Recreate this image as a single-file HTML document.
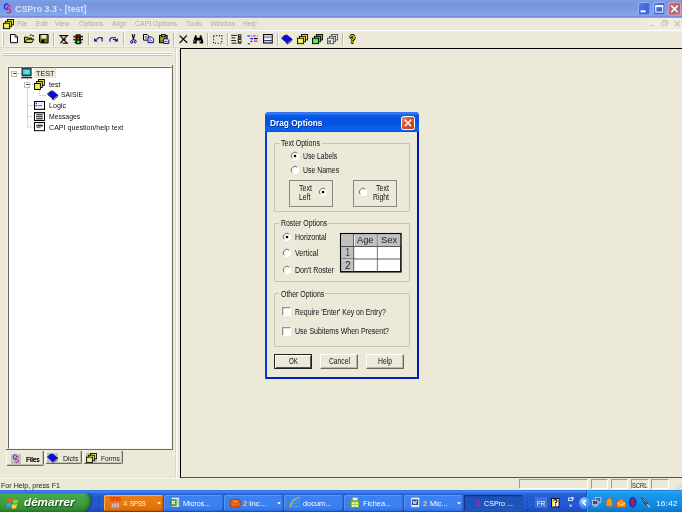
<!DOCTYPE html>
<html><head><meta charset="utf-8"><title>CSPro</title>
<style>
*{box-sizing:border-box;margin:0;padding:0}
html,body{width:682px;height:512px;overflow:hidden}
#root{position:absolute;left:0;top:0;width:682px;height:512px;overflow:hidden;will-change:transform}
body{position:relative;background:#ece9d8;font-family:"Liberation Sans",sans-serif;font-size:8px;color:#222}
.a{position:absolute}
.t{position:absolute;white-space:nowrap;line-height:1.16;transform-origin:0 0}
svg{position:absolute;overflow:visible}
#title{background:linear-gradient(#7ca3e7 0,#7a98e0 1.3px,#7996df 5px,#7a98e0 9px,#7fa4e8 13px,#80a9eb 15.3px,#7490e0 16.3px,#6f88dc 17px,#8aa0e0 17.5px)}
.sep{position:absolute;top:32.5px;width:1px;height:13px;background:#bcb9a8;box-shadow:1px 0 0 rgba(255,255,255,.8)}
#mdi{border-left:1.4px solid #000;border-top:1.3px solid #000;border-bottom:1px solid #55534a;border-right:none;background:#ece9d8}
#tree{background:#fff;border:1.2px solid #6c695c;border-right:1.6px solid #f6f5ee;border-bottom:1.6px solid #f6f5ee;box-shadow:-1px -1px 0 #f2f0e6}
#dlg{background:#ece9d8;border:2px solid #0a3be0;border-top:none;border-right-color:#0019b4;border-bottom-color:#0020c0;border-radius:4px 4px 0 0}
#dt{border-radius:4px 4px 0 0;background:linear-gradient(#2a70ee 0,#3a80f4 1.2px,#0c5ce8 3.5px,#0655e2 6px,#0452de 11px,#0a5eec 15.5px,#0c66f6 18px,#0a4ad8 19.8px)}
.gb{position:absolute;border:1px solid #c9c5b2;border-radius:1px}
.rad{position:absolute;width:8.2px;height:8.2px;border-radius:50%;background:#fff;border:1px solid;border-color:#807d70 #fdfcf8 #fdfcf8 #807d70;box-shadow:inset .7px .7px 0 #6a6860;transform:rotate(0deg)}
.rad.on:after{content:"";position:absolute;left:1.9px;top:1.9px;width:2.4px;height:2.4px;border-radius:50%;background:#000}
.chk{position:absolute;width:9px;height:9px;background:#fff;border:1px solid #fff;border-top-color:#96948a;border-left-color:#96948a;box-shadow:inset .6px .6px 0 #c8c6bc}
.sbox{position:absolute;border:1px solid #8a887a}
.btn{position:absolute;height:15px;border:1px solid #fff;border-right-color:#6a685c;border-bottom-color:#6a685c;box-shadow:inset -1px -1px 0 #bab7a6}
.sp{position:absolute;top:479.4px;height:10px;border:1px solid #9d9a8a;border-right-color:#fff;border-bottom-color:#fff}
#task{background:linear-gradient(#2a62d8 0,#3c88f0 1px,#3a84ee 2.2px,#2a64da 3.6px,#2459d2 7px,#2358d2 16px,#1f4fc4 20px,#1c48b8 22.2px)}
.tb{position:absolute;top:495.2px;height:16.2px;border-radius:2px;background:linear-gradient(#4a8cf2 0,#3c81f2 1.5px,#3b7ff0 12px,#3474e6 15px,#2a62d4 16.2px);box-shadow:inset 1px 1px 0 rgba(110,165,250,.5),inset -.6px 0 0 rgba(20,60,160,.5)}

</style></head><body><div id="root">
<div class="a" id="title" style="left:0px;top:0px;width:682px;height:17.5px;"></div>
<span class="t" style="left:15.00px;top:3px;line-height:11px;font-size:9.6px;color:#d6e0f7;font-weight:bold;transform:scaleX(0.9244);">CSPro 3.3 - [test]</span>
<span class="t" style="left:17.00px;top:19px;line-height:9px;font-size:7.8px;color:#b0ac9c;transform:scaleX(0.8354);">File</span>
<span class="t" style="left:35.70px;top:19px;line-height:9px;font-size:7.8px;color:#b0ac9c;transform:scaleX(0.8705);">Edit</span>
<span class="t" style="left:55.40px;top:19px;line-height:9px;font-size:7.8px;color:#b0ac9c;transform:scaleX(0.8589);">View</span>
<span class="t" style="left:79.00px;top:19px;line-height:9px;font-size:7.8px;color:#b0ac9c;transform:scaleX(0.9003);">Options</span>
<span class="t" style="left:111.50px;top:19px;line-height:9px;font-size:7.8px;color:#b0ac9c;transform:scaleX(0.8360);">Align</span>
<span class="t" style="left:135.00px;top:19px;line-height:9px;font-size:7.8px;color:#b0ac9c;transform:scaleX(0.8888);">CAPI Options</span>
<span class="t" style="left:185.70px;top:19px;line-height:9px;font-size:7.8px;color:#b0ac9c;transform:scaleX(0.8787);">Tools</span>
<span class="t" style="left:210.00px;top:19px;line-height:9px;font-size:7.8px;color:#b0ac9c;transform:scaleX(0.9120);">Window</span>
<span class="t" style="left:243.00px;top:19px;line-height:9px;font-size:7.8px;color:#b0ac9c;transform:scaleX(0.8602);">Help</span>
<div class="a" style="left:0px;top:30px;width:682px;height:1px;background:#fff"></div>
<div class="sep" style="left:53.0px"></div>
<div class="sep" style="left:88.0px"></div>
<div class="sep" style="left:123.0px"></div>
<div class="sep" style="left:172.5px"></div>
<div class="sep" style="left:207.0px"></div>
<div class="sep" style="left:226.5px"></div>
<div class="sep" style="left:277.0px"></div>
<div class="sep" style="left:341.5px"></div>
<div class="a" style="left:1.5px;top:32.5px;width:2.2px;height:13px;border-left:1px solid #fff;border-right:1px solid #c4c1b1"></div>
<div class="a" id="mdi" style="left:179.7px;top:47.6px;width:502.3px;height:430px;"></div>
<div class="a" style="left:175.2px;top:48px;width:0.8px;height:429.5px;background:#dcd9cc"></div>
<div class="a" style="left:176px;top:48px;width:1.3px;height:429.5px;background:#fff"></div>
<div class="a" style="left:3.2px;top:51.6px;width:168.4px;height:2px;border-top:1px solid #fff;border-bottom:1px solid #c6c2b2"></div>
<div class="a" style="left:3.2px;top:54.3px;width:168.4px;height:2px;border-top:1px solid #fff;border-bottom:1px solid #c6c2b2"></div>
<div class="a" id="tree" style="left:7.6px;top:66.6px;width:164.2px;height:382.8px;"></div>
<div class="a" style="left:171.8px;top:65px;width:1px;height:385.4px;background:#6e6b5e"></div>
<div class="a" style="left:34px;top:68px;width:22px;height:10px;background:#ece9d8"></div>
<span class="t" style="left:36.00px;top:69px;line-height:9px;font-size:7.8px;color:#111;transform:scaleX(0.9280);">TEST</span>
<span class="t" style="left:49.00px;top:80px;line-height:9px;font-size:7.8px;color:#111;transform:scaleX(0.9147);">test</span>
<span class="t" style="left:61.00px;top:90px;line-height:9px;font-size:7.8px;color:#111;transform:scaleX(0.8749);">SAISIE</span>
<span class="t" style="left:48.80px;top:101px;line-height:9px;font-size:7.8px;color:#111;transform:scaleX(0.9117);">Logic</span>
<span class="t" style="left:48.80px;top:112px;line-height:9px;font-size:7.8px;color:#111;transform:scaleX(0.8776);">Messages</span>
<span class="t" style="left:48.80px;top:123px;line-height:9px;font-size:7.8px;color:#111;transform:scaleX(0.9103);">CAPI question/help text</span>
<div id="dlg" class="a" style="left:265px;top:112px;width:154px;height:267px"><div id="dt" class="a" style="left:-2px;top:0;width:154px;height:19.8px"></div></div>
<span class="t" style="left:269.60px;top:117px;line-height:11px;font-size:9.4px;color:#fff;font-weight:bold;transform:scaleX(0.8835);text-shadow:.5px .5px 0 #0a2a8c;">Drag Options</span>
<div class="gb" style="left:274px;top:143.2px;width:136px;height:68.8px"></div>
<div class="a" style="left:279.5px;top:142.2px;width:42px;height:3px;background:#ece9d8"></div>
<span class="t" style="left:281.00px;top:138px;line-height:10px;font-size:8.4px;color:#111;transform:scaleX(0.8353);">Text Options</span>
<div class="gb" style="left:274px;top:222.5px;width:136px;height:59px"></div>
<div class="a" style="left:279.1px;top:221.5px;width:49.4px;height:3px;background:#ece9d8"></div>
<span class="t" style="left:280.60px;top:218px;line-height:10px;font-size:8.4px;color:#111;transform:scaleX(0.8282);">Roster Options</span>
<div class="gb" style="left:274px;top:293.2px;width:136px;height:53.8px"></div>
<div class="a" style="left:279.1px;top:292.2px;width:46.4px;height:3px;background:#ece9d8"></div>
<span class="t" style="left:280.60px;top:289px;line-height:10px;font-size:8.4px;color:#111;transform:scaleX(0.8300);">Other Options</span>
<svg style="left:289.8px;top:150.7px" width="10" height="10" viewBox="0 0 10 10"><circle cx="5" cy="5" r="4.0" fill="#fff"/><path d="M2.38 7.62A3.7 3.7 0 0 1 7.62 2.38" fill="none" stroke="#6e6c60" stroke-width="1"/><path d="M7.62 2.38A3.7 3.7 0 0 1 2.38 7.62" fill="none" stroke="#fff" stroke-width="1"/><circle cx="5" cy="5" r="1.35" fill="#000"/></svg>
<span class="t" style="left:302.70px;top:151px;line-height:10px;font-size:8.4px;color:#111;transform:scaleX(0.8162);">Use Labels</span>
<svg style="left:289.8px;top:164.5px" width="10" height="10" viewBox="0 0 10 10"><circle cx="5" cy="5" r="4.0" fill="#fff"/><path d="M2.38 7.62A3.7 3.7 0 0 1 7.62 2.38" fill="none" stroke="#6e6c60" stroke-width="1"/><path d="M7.62 2.38A3.7 3.7 0 0 1 2.38 7.62" fill="none" stroke="#fff" stroke-width="1"/></svg>
<span class="t" style="left:302.70px;top:165px;line-height:10px;font-size:8.4px;color:#111;transform:scaleX(0.8273);">Use Names</span>
<div class="sbox" style="left:289px;top:180px;width:44px;height:27px"></div>
<div class="sbox" style="left:353px;top:180px;width:44px;height:27px"></div>
<span class="t" style="left:299.00px;top:183px;line-height:10px;font-size:8.4px;color:#111;transform:scaleX(0.8439);">Text</span>
<span class="t" style="left:299.00px;top:192px;line-height:10px;font-size:8.4px;color:#111;transform:scaleX(0.8208);">Left</span>
<svg style="left:317.6px;top:187.2px" width="10" height="10" viewBox="0 0 10 10"><circle cx="5" cy="5" r="4.0" fill="#fff"/><path d="M2.38 7.62A3.7 3.7 0 0 1 7.62 2.38" fill="none" stroke="#6e6c60" stroke-width="1"/><path d="M7.62 2.38A3.7 3.7 0 0 1 2.38 7.62" fill="none" stroke="#fff" stroke-width="1"/><circle cx="5" cy="5" r="1.35" fill="#000"/></svg>
<svg style="left:358.2px;top:187.2px" width="10" height="10" viewBox="0 0 10 10"><circle cx="5" cy="5" r="4.0" fill="#fff"/><path d="M2.38 7.62A3.7 3.7 0 0 1 7.62 2.38" fill="none" stroke="#6e6c60" stroke-width="1"/><path d="M7.62 2.38A3.7 3.7 0 0 1 2.38 7.62" fill="none" stroke="#fff" stroke-width="1"/></svg>
<span class="t" style="left:376.00px;top:183px;line-height:10px;font-size:8.4px;color:#111;transform:scaleX(0.8439);">Text</span>
<span class="t" style="left:373.00px;top:192px;line-height:10px;font-size:8.4px;color:#111;transform:scaleX(0.8159);">Right</span>
<svg style="left:281.6px;top:231.7px" width="10" height="10" viewBox="0 0 10 10"><circle cx="5" cy="5" r="4.0" fill="#fff"/><path d="M2.38 7.62A3.7 3.7 0 0 1 7.62 2.38" fill="none" stroke="#6e6c60" stroke-width="1"/><path d="M7.62 2.38A3.7 3.7 0 0 1 2.38 7.62" fill="none" stroke="#fff" stroke-width="1"/><circle cx="5" cy="5" r="1.35" fill="#000"/></svg>
<span class="t" style="left:294.50px;top:232px;line-height:10px;font-size:8.4px;color:#111;transform:scaleX(0.8330);">Horizontal</span>
<svg style="left:281.6px;top:247.6px" width="10" height="10" viewBox="0 0 10 10"><circle cx="5" cy="5" r="4.0" fill="#fff"/><path d="M2.38 7.62A3.7 3.7 0 0 1 7.62 2.38" fill="none" stroke="#6e6c60" stroke-width="1"/><path d="M7.62 2.38A3.7 3.7 0 0 1 2.38 7.62" fill="none" stroke="#fff" stroke-width="1"/></svg>
<span class="t" style="left:294.50px;top:248px;line-height:10px;font-size:8.4px;color:#111;transform:scaleX(0.8458);">Vertical</span>
<svg style="left:281.6px;top:264.6px" width="10" height="10" viewBox="0 0 10 10"><circle cx="5" cy="5" r="4.0" fill="#fff"/><path d="M2.38 7.62A3.7 3.7 0 0 1 7.62 2.38" fill="none" stroke="#6e6c60" stroke-width="1"/><path d="M7.62 2.38A3.7 3.7 0 0 1 2.38 7.62" fill="none" stroke="#fff" stroke-width="1"/></svg>
<span class="t" style="left:294.50px;top:265px;line-height:10px;font-size:8.4px;color:#111;transform:scaleX(0.8401);">Don't Roster</span>
<svg style="left:339px;top:231.6px" width="64" height="41" viewBox="0 0 64 41"><rect x="1.7" y="1.7" width="60.2" height="38.1" fill="#fff" stroke="#000" stroke-width="1.5"/><rect x="2.3" y="2.3" width="58.9" height="12" fill="#c0c0c0"/><rect x="2.3" y="2.3" width="12.2" height="36.4" fill="#c0c0c0"/><g stroke="#333" stroke-width=".8"><path d="M14.7 2v37M2 14.5h59.5M2 27h59.5"/><path d="M38.4 2v37" stroke="#555"/></g><path d="M15.5 2.6v11.4" stroke="#fff" stroke-width=".8"/><path d="M2.4 27.8h11.8" stroke="#fff" stroke-width=".7"/><path d="M38.9 2.6v11.4" stroke="#d8d8d8" stroke-width=".6"/></svg>
<span class="t" style="left:357.00px;top:234px;line-height:11px;font-size:9.6px;color:#222;transform:scaleX(0.9601);">Age</span>
<span class="t" style="left:380.70px;top:234px;line-height:11px;font-size:9.6px;color:#222;transform:scaleX(0.9854);">Sex</span>
<span class="t" style="left:345.60px;top:246px;line-height:12px;font-size:10.5px;color:#222;transform:scaleX(0.6165);">1</span>
<span class="t" style="left:344.70px;top:259px;line-height:12px;font-size:10.5px;color:#222;transform:scaleX(0.9590);">2</span>
<div class="chk" style="left:282px;top:307px"></div>
<span class="t" style="left:295.00px;top:307px;line-height:10px;font-size:8.4px;color:#111;transform:scaleX(0.8263);">Require 'Enter' Key on Entry?</span>
<div class="chk" style="left:282px;top:326.6px"></div>
<span class="t" style="left:295.00px;top:326px;line-height:10px;font-size:8.4px;color:#111;transform:scaleX(0.8381);">Use Subitems When Present?</span>
<div class="btn" style="left:274.3px;top:354.2px;width:37.6px;border-color:#222;box-shadow:inset 1px 1px 0 #fff,inset -1px -1px 0 #55534a"></div>
<div class="btn" style="left:320px;top:354.2px;width:37.8px"></div>
<div class="btn" style="left:366px;top:354.2px;width:37.8px"></div>
<span class="t" style="left:288.50px;top:356px;line-height:10px;font-size:8.4px;color:#111;transform:scaleX(0.7416);">OK</span>
<span class="t" style="left:328.50px;top:356px;line-height:10px;font-size:8.4px;color:#111;transform:scaleX(0.8031);">Cancel</span>
<span class="t" style="left:378.00px;top:356px;line-height:10px;font-size:8.4px;color:#111;transform:scaleX(0.8104);">Help</span>
<div class="a" style="left:5.8px;top:449.4px;width:167px;height:1px;background:#6e6b5e"></div>
<div class="a" style="left:6px;top:450.8px;width:38.2px;height:14.8px;border:1px solid #fbfaf4;border-top:none;border-right-color:#6e6b5e;border-bottom-color:#6e6b5e;border-radius:0 0 2px 2px;box-shadow:inset -1px -1px 0 #c2bfae;background:#ece9d8"></div>
<div class="a" style="left:44.6px;top:450.8px;width:37px;height:13.6px;border:1px solid #fbfaf4;border-top:none;border-right-color:#6e6b5e;border-bottom-color:#6e6b5e;border-radius:0 0 2px 2px;box-shadow:inset -1px -1px 0 #c2bfae;"></div>
<div class="a" style="left:82.8px;top:450.8px;width:40.6px;height:13.6px;border:1px solid #fbfaf4;border-top:none;border-right-color:#6e6b5e;border-bottom-color:#6e6b5e;border-radius:0 0 2px 2px;box-shadow:inset -1px -1px 0 #c2bfae;"></div>
<div class="a" style="left:11px;top:453.8px;width:10px;height:10.6px;background:#c0c0c0"></div>
<div class="a" style="left:47px;top:453px;width:10.8px;height:10.2px;background:#c0c0c0"></div>
<div class="a" style="left:86px;top:453px;width:10.8px;height:10.2px;background:#c0c0c0"></div>
<span class="t" style="left:25.80px;top:455px;line-height:9px;font-size:7.8px;color:#000;transform:scaleX(0.8258);text-shadow:.3px 0 0 #000;">Files</span>
<span class="t" style="left:62.50px;top:454px;line-height:9px;font-size:7.8px;color:#111;transform:scaleX(0.8943);">Dicts</span>
<span class="t" style="left:101.00px;top:454px;line-height:9px;font-size:7.8px;color:#111;transform:scaleX(0.8508);">Forms</span>
<div class="a" style="left:0px;top:477.6px;width:180px;height:1px;background:#f7f6ee"></div>
<span class="t" style="left:1.00px;top:481px;line-height:9px;font-size:7.6px;color:#222;transform:scaleX(0.9375);">For Help, press F1</span>
<div class="sp" style="left:519px;width:69px"></div>
<div class="sp" style="left:590.5px;width:17.5px"></div>
<div class="sp" style="left:610.5px;width:17.5px"></div>
<div class="sp" style="left:630.5px;width:18.0px"></div>
<div class="sp" style="left:651px;width:18px"></div>
<span class="t" style="left:631.50px;top:481px;line-height:9px;font-size:7.4px;color:#222;transform:scaleX(0.7852);">SCRL</span>
<div class="a" id="task" style="left:0px;top:489.8px;width:682px;height:22.2px;"></div>
<div class="a" style="left:0px;top:492.6px;width:91px;height:19.4px;border-radius:0 5px 9px 0/0 8px 11px 0;background:linear-gradient(#58b058 0,#52ae52 1.5px,#44a444 4px,#3e9c3e 11px,#348c34 16px,#2c7c2c 19.4px);box-shadow:inset -2px 0 3px rgba(20,70,20,.55),1px 0 1.5px rgba(10,30,90,.6)"></div>
<span class="t" style="left:23.60px;top:495px;line-height:14px;font-size:11.8px;color:#fff;font-weight:bold;font-style:italic;transform:scaleX(0.9890);text-shadow:.7px .8px 1px rgba(20,50,20,.8);">démarrer</span>
<svg style="left:7.4px;top:496.6px" width="12" height="11.6" viewBox="0 0 12 11.6"><g transform="scale(1.09 1.04)"><path d="M1.4 1.6q2-1.2 4 .2l-1 3.6q-2-1.2-4 0z" fill="#f05a28"/><path d="M6.2 2.2q2 1.2 4.4 0l-1 3.6q-2.2 1.2-4.4 0z" fill="#80d040"/><path d="M0.2 6.2q2-1.2 4 .2l-1 3.8q-2-1.4-4-.2z" fill="#4a94f8"/><path d="M5 6.8q2.2 1.2 4.4 0l-1 3.8q-2.2 1.2-4.4 0z" fill="#fcd430"/></g></svg>
<svg style="left:97.6px;top:496.5px" width="4" height="14" viewBox="0 0 4 14"><g fill="#0e2a8a"><rect x="0.2" y="0.5" width="1.2" height="1.2"/><rect x="1.8" y="2.5" width="1.2" height="1.2"/><rect x="0.2" y="4.5" width="1.2" height="1.2"/><rect x="1.8" y="6.5" width="1.2" height="1.2"/><rect x="0.2" y="8.5" width="1.2" height="1.2"/><rect x="1.8" y="10.5" width="1.2" height="1.2"/><rect x="0.2" y="12.5" width="1.2" height="1.2"/></g><g fill="#38a4f8" opacity=".95"><rect x="0.9" y="1.2" width=".9" height=".9"/><rect x="2.5" y="3.2" width=".9" height=".9"/><rect x="0.9" y="5.2" width=".9" height=".9"/><rect x="2.5" y="7.2" width=".9" height=".9"/><rect x="0.9" y="9.2" width=".9" height=".9"/><rect x="2.5" y="11.2" width=".9" height=".9"/></g></svg>
<svg style="left:527.4px;top:496.5px" width="4" height="14" viewBox="0 0 4 14"><g fill="#0e2a8a"><rect x="0.2" y="0.5" width="1.2" height="1.2"/><rect x="1.8" y="2.5" width="1.2" height="1.2"/><rect x="0.2" y="4.5" width="1.2" height="1.2"/><rect x="1.8" y="6.5" width="1.2" height="1.2"/><rect x="0.2" y="8.5" width="1.2" height="1.2"/><rect x="1.8" y="10.5" width="1.2" height="1.2"/><rect x="0.2" y="12.5" width="1.2" height="1.2"/></g><g fill="#38a4f8" opacity=".95"><rect x="0.9" y="1.2" width=".9" height=".9"/><rect x="2.5" y="3.2" width=".9" height=".9"/><rect x="0.9" y="5.2" width=".9" height=".9"/><rect x="2.5" y="7.2" width=".9" height=".9"/><rect x="0.9" y="9.2" width=".9" height=".9"/><rect x="2.5" y="11.2" width=".9" height=".9"/></g></svg>
<div class="tb" style="left:104px;width:59.19999999999999px;background:linear-gradient(#f09030 0,#ea7c12 2px,#e4760c 11px,#d66a06 16.4px);box-shadow:inset 1px 1px 0 #fcb050,inset -1px -1px 0 #c86000"></div>
<div class="tb" style="left:164.2px;width:59.0px;"></div>
<div class="tb" style="left:224.2px;width:58.400000000000034px;"></div>
<div class="tb" style="left:283.6px;width:59.799999999999955px;"></div>
<div class="tb" style="left:344.2px;width:59.0px;"></div>
<div class="tb" style="left:404.2px;width:58.400000000000034px;"></div>
<div class="tb" style="left:463.6px;width:59.60000000000002px;background:linear-gradient(#1a47a4 0,#1e52b8 3px,#2056bd 16.4px);box-shadow:inset .8px .8px 1px rgba(0,20,90,.6)"></div>
<span class="t" style="left:122.80px;top:499px;line-height:9px;font-size:7.6px;color:#fcc878;font-weight:bold;transform:scaleX(0.9937);">4</span>
<span class="t" style="left:129.90px;top:499px;line-height:9px;font-size:7.6px;color:#fff;transform:scaleX(0.7792);">SPSS</span>
<span class="t" style="left:183.20px;top:499px;line-height:9px;font-size:7.6px;color:#fff;transform:scaleX(0.9543);">Micros...</span>
<span class="t" style="left:243.40px;top:499px;line-height:9px;font-size:7.6px;color:#fcc878;font-weight:bold;transform:scaleX(0.9937);">2</span>
<span class="t" style="left:249.40px;top:499px;line-height:9px;font-size:7.6px;color:#fff;transform:scaleX(1.0806);">Inc...</span>
<span class="t" style="left:303.30px;top:499px;line-height:9px;font-size:7.6px;color:#fff;transform:scaleX(0.9710);">docum...</span>
<span class="t" style="left:363.20px;top:499px;line-height:9px;font-size:7.6px;color:#fff;transform:scaleX(0.9641);">Fichea...</span>
<span class="t" style="left:423.40px;top:499px;line-height:9px;font-size:7.6px;color:#fcc878;font-weight:bold;transform:scaleX(0.9937);">2</span>
<span class="t" style="left:429.70px;top:499px;line-height:9px;font-size:7.6px;color:#fff;transform:scaleX(0.9695);">Mic...</span>
<span class="t" style="left:483.70px;top:499px;line-height:9px;font-size:7.6px;color:#fff;transform:scaleX(0.9374);">CSPro ...</span>
<svg style="left:157px;top:502px" width="4" height="3" viewBox="0 0 4 3"><path d="M0 0.2h4l-2 2.4z" fill="#fff"/></svg>
<svg style="left:277px;top:502px" width="4" height="3" viewBox="0 0 4 3"><path d="M0 0.2h4l-2 2.4z" fill="#fff"/></svg>
<svg style="left:457px;top:502px" width="4" height="3" viewBox="0 0 4 3"><path d="M0 0.2h4l-2 2.4z" fill="#fff"/></svg>
<svg style="left:110px;top:496.5px" width="11" height="11.5" viewBox="0 0 11 11.5"><g fill="#c0c0d0"><rect x="1.8" y="6.8" width="1.8" height="4"/><rect x="4.4" y="4.8" width="2" height="6"/><rect x="7.2" y="6.2" width="1.8" height="4.6"/></g><rect x="0.4" y="10.3" width="10.2" height="1" fill="#9a9aac"/><rect x="4.4" y="4.8" width="2" height="1.4" fill="#e05050"/></svg>
<span class="t" style="left:109.80px;top:497px;line-height:5px;font-size:4.6px;color:#f01818;font-weight:bold;transform:scaleX(0.8963);">SPSS</span>
<svg style="left:170.3px;top:497px" width="9.6" height="10.6" viewBox="0 0 9.6 10.6"><rect x="1.2" y="0.4" width="8" height="9.6" fill="#f4f8f0" stroke="#5a8a5a" stroke-width=".6"/><rect x="0.2" y="2.2" width="6.4" height="6.6" fill="#2a8a3a"/><path d="M1.6 3.6l3.6 3.8M5.2 3.6l-3.6 3.8" stroke="#fff" stroke-width="1.2"/><path d="M7 3h1.6M7 5h1.6M7 7h1.6" stroke="#3a9a4a" stroke-width=".7"/></svg>
<svg style="left:230px;top:498.6px" width="10.6" height="8.4" viewBox="0 0 10.6 8.4"><rect x="0.4" y="0.4" width="9.8" height="7.6" rx="2" fill="#f06418" stroke="#a83000" stroke-width=".8"/><path d="M1.4 1.8l3.9 2.8l3.9-2.8" fill="#f8a040" stroke="#b03800" stroke-width=".7"/></svg>
<svg style="left:290.4px;top:496.8px" width="11" height="11.4" viewBox="0 0 11 11.4"><circle cx="5.4" cy="6" r="4" fill="none" stroke="#3a9ae8" stroke-width="1.9"/><path d="M2.2 6.2h6.6" stroke="#3a9ae8" stroke-width="1.6"/><path d="M0.8 10.4q-1.4-2.8 3.2-7.2q4-3.4 6.2-2.4" fill="none" stroke="#f0b428" stroke-width="1.1"/><path d="M9.4 5.6v2h-2z" fill="#2458d0"/></svg>
<svg style="left:350.2px;top:496.8px" width="9.8" height="11.2" viewBox="0 0 9.8 11.2"><rect x="2.4" y="0.4" width="5.4" height="4" fill="#f4f4ec" stroke="#7a9a4a" stroke-width=".6"/><rect x="0.4" y="3.6" width="9" height="7.2" rx="1" fill="#8cc030" stroke="#5a8a18" stroke-width=".6"/><rect x="2" y="5.4" width="2.6" height="1.8" fill="#f4f8e8"/><rect x="5.4" y="5.4" width="2.6" height="1.8" fill="#f4f8e8"/><rect x="2" y="8" width="2.6" height="1.8" fill="#f4f8e8"/><rect x="5.4" y="8" width="2.6" height="1.8" fill="#f4f8e8"/></svg>
<svg style="left:410.4px;top:497px" width="9.8" height="10.6" viewBox="0 0 9.8 10.6"><rect x="1" y="0.4" width="8.4" height="9.8" rx="1" fill="#f0f2f8" stroke="#8890b0" stroke-width=".6"/><rect x="2" y="2.4" width="6.2" height="5.6" fill="#2a4a9a"/><path d="M3 3.6l.9 3.2l.9-2.4l.9 2.4l.9-3.2" fill="none" stroke="#fff" stroke-width=".8"/></svg>
<div class="a" style="left:535.4px;top:497.2px;width:11.6px;height:10.4px;background:#4272d6"></div>
<span class="t" style="left:537.20px;top:499px;line-height:9px;font-size:7.6px;color:#fff;transform:scaleX(0.8094);">FR</span>
<svg style="left:551.4px;top:498px" width="8.8" height="9.6" viewBox="0 0 8.8 9.6"><rect x="0.5" y="0.5" width="7.6" height="8.4" fill="#fffef0" stroke="#111" stroke-width="1"/><rect x="1" y="1" width="1.6" height="7.4" fill="#f0e040"/><path d="M3 3.2q0-1.6 1.5-1.6q1.5 0 1.5 1.4q0 1-1.4 1.6v.9" fill="none" stroke="#111" stroke-width="1.2"/><rect x="4" y="6.4" width="1.2" height="1.2" fill="#111"/><path d="M3.4 3.4q0-1.2 1.1-1.2" fill="none" stroke="#e8d820" stroke-width=".6"/></svg>
<svg style="left:568px;top:497.4px" width="6" height="11" viewBox="0 0 6 11"><rect x="0.4" y="1" width="4" height="2.6" fill="none" stroke="#e8eefc" stroke-width=".9"/><path d="M3 0.4h2.4v2" stroke="#e8eefc" stroke-width=".8" fill="none"/><path d="M1 7.8h3.4l-1.7 2.4z" fill="#c8d8f8"/></svg>
<div class="a" style="left:585.6px;top:489.8px;width:96.4px;height:22.2px;background:linear-gradient(#1878d8 0,#2aa4f4 1.5px,#1a98ee 4px,#1290e8 12px,#0f84dc 18px,#0c74c8 21.7px);box-shadow:inset 1px 0 0 #0c58b8,inset 2px 0 0 rgba(90,190,250,.5)"></div>
<div class="a" style="left:579.2px;top:497px;width:11.6px;height:11.6px;border-radius:50%;background:radial-gradient(circle at 35% 30%,#b8dcff 0,#4a9cf4 40%,#1c6ae0 100%);box-shadow:0 0 0 .6px #2a60c0"></div>
<svg style="left:579.2px;top:497px" width="11.6" height="11.6" viewBox="0 0 11.6 11.6"><path d="M6.8 3.2l-2.6 2.6l2.6 2.6" fill="none" stroke="#fff" stroke-width="1.5"/></svg>
<svg style="left:592.2px;top:497.4px" width="9.2" height="10.4" viewBox="0 0 9.2 10.4"><rect x="3.4" y="0.5" width="5.4" height="4.4" fill="#4a5aa0" stroke="#c8ccd8" stroke-width=".8"/><rect x="0.5" y="3.3" width="5.4" height="4.4" fill="#3a4890" stroke="#d0d4e0" stroke-width=".8"/><rect x="1" y="8.3" width="4.6" height="1.3" fill="#c0c4d0"/><rect x="5.8" y="5.4" width="3" height="1.1" fill="#b0b4c4"/></svg>
<svg style="left:605.4px;top:497px" width="9" height="11" viewBox="0 0 9 11"><path d="M4.4 1q-2.6 .2-2.8 3.6l-.2 3l-1 1.4h8l-1-1.4l-.2-3q-.2-3.4-2.8-3.6z" fill="#f89a20" stroke="#c06008" stroke-width=".6"/><circle cx="4.4" cy="9.6" r="1" fill="#e07810"/><path d="M1 1.4l.8 .8M7.8 1.4l-.8 .8" stroke="#503010" stroke-width=".6"/></svg>
<svg style="left:616px;top:497.6px" width="10.6" height="10" viewBox="0 0 10.6 10"><path d="M0.6 4.6l4.6-4l4.8 4v4.6h-9.4z" fill="#f8941c" stroke="#d04808" stroke-width=".8"/><path d="M1.6 5l3.6 2.4l3.8-2.4" fill="none" stroke="#fce0a0" stroke-width=".9"/></svg>
<svg style="left:629.2px;top:497.4px" width="7.4" height="10.6" viewBox="0 0 7.4 10.6"><ellipse cx="3.7" cy="5.3" rx="3.5" ry="5.1" fill="#1838d8" stroke="#0a1a80" stroke-width=".5"/><path d="M2 3.4l3.4 3.6l-1.8 1.8v-7l1.8 1.8l-3.4 3.6" fill="none" stroke="#e81818" stroke-width=".9"/></svg>
<svg style="left:640.6px;top:497.4px" width="10" height="11" viewBox="0 0 10 11"><path d="M0.6 0.6l5.4 4.2l2.4 4.6l-4.6-2.6z" fill="#555" stroke="#222" stroke-width=".6"/><path d="M6.2 7.2l2.6 3" stroke="#d8dce8" stroke-width="1.1"/><path d="M2 2.2l3.6 3.4" stroke="#b0b4c0" stroke-width=".9"/></svg>
<span class="t" style="left:655.60px;top:499px;line-height:9px;font-size:8px;color:#eef6ff;transform:scaleX(1.0690);">16:42</span>
<svg style="left:637.6px;top:1.7px" width="12.4" height="13.4" viewBox="0 0 12.4 13.4"><defs><linearGradient id="tg1" x1="0" y1="0" x2="1" y2="1"><stop offset="0" stop-color="#6284ea"/><stop offset=".55" stop-color="#4064dc"/><stop offset="1" stop-color="#4a6de0"/></linearGradient></defs><rect x="0" y="0" width="12.4" height="13.4" rx="2" fill="url(#tg1)"/><rect x=".4" y=".4" width="11.6" height="12.6" rx="1.8" fill="none" stroke="rgba(196,214,252,.85)" stroke-width=".8"/><rect x="2.6" y="8.3" width="5" height="2" fill="#fff"/></svg>
<svg style="left:653px;top:1.7px" width="12.4" height="13.4" viewBox="0 0 12.4 13.4"><defs><linearGradient id="tg2" x1="0" y1="0" x2="1" y2="1"><stop offset="0" stop-color="#6284ea"/><stop offset=".55" stop-color="#4064dc"/><stop offset="1" stop-color="#4a6de0"/></linearGradient></defs><rect x="0" y="0" width="12.4" height="13.4" rx="2" fill="url(#tg2)"/><rect x=".4" y=".4" width="11.6" height="12.6" rx="1.8" fill="none" stroke="rgba(196,214,252,.85)" stroke-width=".8"/><rect x="2.8" y="3.8" width="6.9" height="6.3" fill="none" stroke="#fff" stroke-width="1"/><rect x="2.3" y="3.3" width="7.9" height="1.8" fill="#fff"/></svg>
<svg style="left:668px;top:1.7px" width="12.9" height="13.4" viewBox="0 0 12.9 13.4"><defs><linearGradient id="tg3" x1="0" y1="0" x2="1" y2="1"><stop offset="0" stop-color="#c67a8a"/><stop offset=".55" stop-color="#b26175"/><stop offset="1" stop-color="#ba6a7c"/></linearGradient></defs><rect x="0" y="0" width="12.9" height="13.4" rx="2" fill="url(#tg3)"/><rect x=".4" y=".4" width="12.1" height="12.6" rx="1.8" fill="none" stroke="rgba(240,210,230,.7)" stroke-width=".8"/><path d="M3.2 3.6 L9.8 10.2 M9.8 3.6 L3.2 10.2" stroke="#fff" stroke-width="1.5"/></svg>
<div class="a" style="left:647px;top:18px;width:35px;height:12px;background:#efede1"></div>
<svg style="left:647px;top:18px" width="35" height="12" viewBox="0 0 35 12"><g stroke="#c9c6b8" fill="none" stroke-width="1"><path d="M3.3 7.4h4"/><rect x="14.8" y="4" width="4.3" height="3.8"/><path d="M16.3 4v-1.6h4.4v3.8h-1.6"/><path d="M27.6 3.3l5.6 5M33.2 3.3l-5.6 5" stroke-width="1.2"/></g></svg>
<div class="a" style="left:401px;top:116px;width:14px;height:14px;border-radius:2.5px;border:1px solid #fff;background:linear-gradient(135deg,#ec8a6c,#dc4f2c 45%,#c0370f)"></div>
<svg style="left:401px;top:116px" width="14" height="14" viewBox="0 0 14 14"><path d="M3.8 3.8 L10.2 10.2 M10.2 3.8 L3.8 10.2" stroke="#fff" stroke-width="1.5"/></svg>
<svg style="left:9.8px;top:34px" width="8" height="9.2" viewBox="0 0 8 9.2"><path d="M0.5 0.5h4.6l2.4 2.4v5.8h-7z" fill="#fff" stroke="#000" stroke-width="1"/><path d="M5 0.6v2.5h2.4" fill="none" stroke="#000" stroke-width=".8"/></svg>
<svg style="left:23.8px;top:34px" width="10.4" height="9" viewBox="0 0 10.4 9"><path d="M0.5 3.2h3l.8 .9h3.4v4.4h-7.2z" fill="#c8c83c" stroke="#000" stroke-width="1"/><path d="M1.2 8.5l1.8-3.3h7l-2.2 3.3z" fill="#d8d850" stroke="#000" stroke-width=".9"/><path d="M5.6 1.6q1.8-1.6 3.2 0" fill="none" stroke="#000" stroke-width=".9"/><path d="M8.2 2.4h1.6v-1.6z" fill="#000"/></svg>
<svg style="left:39.2px;top:34px" width="9.8" height="9.6" viewBox="0 0 9.8 9.6"><path d="M0.5 0.5h8.6v8.4h-7.6l-1-1z" fill="#7c7c10" stroke="#000" stroke-width="1"/><rect x="2.3" y="0.9" width="5" height="3.6" fill="#e8e8e0"/><rect x="2.4" y="5.6" width="4.8" height="3.2" fill="#000"/><rect x="5.6" y="6.3" width="1.1" height="1.9" fill="#e0e0d8"/></svg>
<svg style="left:58.6px;top:35px" width="9.4" height="8.8" viewBox="0 0 9.4 8.8"><g stroke="#000" fill="none" stroke-width="1.1"><path d="M0.3 0.6h9"/><path d="M1.5 0.8l6.3 7.4M7.8 0.8l-6.4 7.4"/><path d="M3 4.8h4" stroke-width=".9"/><path d="M3.5 8.2h5.6"/></g></svg>
<svg style="left:73.4px;top:33.8px" width="10.4" height="10.4" viewBox="0 0 10.4 10.4"><rect x="2.4" y="0.2" width="5.6" height="10" rx="1.2" fill="#111"/><path d="M0.4 1.6l2.8 1.2v1l-2.8-.6zM10 1.6l-2.8 1.2v1l2.8-.6zM0.4 4.6l2.8 1.2v1l-2.8-.6zM10 4.6l-2.8 1.2v1l2.8-.6zM0.6 8.6l2.6-.8v1.4zM9.8 8.6l-2.6-.8v1.4z" fill="#111"/><circle cx="5.2" cy="1.9" r="1.05" fill="#a01818"/><circle cx="5.2" cy="4.8" r="1.05" fill="#706010"/><circle cx="5.2" cy="7.9" r="1.4" fill="#20f020"/></svg>
<svg style="left:93.5px;top:36.5px" width="8.8" height="5" viewBox="0 0 8.8 5"><path d="M2.4 2.6l2.2-1.8h3.5v3.8" fill="none" stroke="#00008b" stroke-width="1.1"/><path d="M0.2 4.6v-3.6l3.6 3.6z" fill="#00008b"/></svg>
<svg style="left:109px;top:36.5px" width="9.2" height="5" viewBox="0 0 9.2 5"><path d="M1.2 4.6q-1.4-3.8 2.4-3.8h3.4" fill="none" stroke="#00008b" stroke-width="1.1"/><path d="M8.8 1v3.6h-3.6z" fill="#00008b"/><path d="M4 2.6h3" stroke="#00008b" stroke-width="1"/></svg>
<svg style="left:129.6px;top:34px" width="6.8" height="9.8" viewBox="0 0 6.8 9.8"><path d="M2.2 0.2l1.3 5.2M4.7 0.2l-1.3 5.2" stroke="#000" stroke-width="1.1" fill="none"/><ellipse cx="1.7" cy="7.9" rx="1" ry="1.5" fill="none" stroke="#00008b" stroke-width="1"/><ellipse cx="5.1" cy="7.5" rx="1" ry="1.5" fill="none" stroke="#00008b" stroke-width="1"/><path d="M2.4 6l1-1.2 1 1.2" stroke="#00008b" fill="none" stroke-width=".9"/></svg>
<svg style="left:143px;top:34.3px" width="11.2" height="9" viewBox="0 0 11.2 9"><path d="M0.5 0.5h3.6l1.6 1.6v4h-5.2z" fill="#fff" stroke="#000" stroke-width="1"/><path d="M1.7 2.4h2M1.7 4h2.6" stroke="#000" stroke-width=".7"/><path d="M5 3h3.6l1.8 1.8v3.8h-5.4z" fill="#fff" stroke="#00008b" stroke-width="1"/><path d="M6.2 5h2M6.2 6.8h2.8" stroke="#00008b" stroke-width=".7"/></svg>
<svg style="left:159px;top:34px" width="10.4" height="9.8" viewBox="0 0 10.4 9.8"><rect x="0.5" y="1.5" width="7.6" height="7.2" fill="#7c7c10" stroke="#000" stroke-width="1"/><rect x="2.4" y="0.4" width="3.8" height="2" fill="#b8b840" stroke="#000" stroke-width=".8"/><path d="M1.6 4h4M1.6 5.6h3" stroke="#c8c860" stroke-width=".7"/><path d="M4.8 4.8h3.4l1.6 1.4v3.2h-5z" fill="#fff" stroke="#00008b" stroke-width="1"/><path d="M6 7.4h2.6" stroke="#00008b" stroke-width=".8"/></svg>
<svg style="left:178.8px;top:35px" width="9" height="8.4" viewBox="0 0 9 8.4"><path d="M0.6 0.6l7.6 7.2M7.8 0.4l-7.2 7.8" stroke="#000" stroke-width="1.2" fill="none"/></svg>
<svg style="left:193.4px;top:35px" width="10.4" height="8.8" viewBox="0 0 10.4 8.8"><path d="M1.6 1.6h2.2v1.2h2.8v-1.2h2.2l1.4 4.6v2.4h-3.6v-3h-2.8v3h-3.6v-2.4z" fill="#000"/><rect x="2" y="0.2" width="1.6" height="1.6" fill="#000"/><rect x="6.8" y="0.2" width="1.6" height="1.6" fill="#000"/><rect x="1.3" y="5.4" width="1" height="1.6" fill="#aaa"/><rect x="6.9" y="5.4" width="1" height="1.6" fill="#aaa"/></svg>
<svg style="left:212.8px;top:35px" width="9.6" height="8.8" viewBox="0 0 9.6 8.8"><rect x="0.6" y="0.6" width="8.2" height="7.6" fill="none" stroke="#000" stroke-width="1.1" stroke-dasharray="1 1.7"/></svg>
<svg style="left:231.3px;top:34px" width="10.8" height="10" viewBox="0 0 10.8 10"><g stroke="#000" stroke-width=".9"><path d="M0.2 1.4h5.6M0.6 3.9h3.6M0.2 6.6h5M0.6 9.2h5"/></g><rect x="6.8" y="0.2" width="3.6" height="9.6" fill="#222"/><rect x="8" y="0.9" width="1.8" height="1.1" fill="#bbb"/><rect x="7.6" y="3.4" width="2.2" height="1.1" fill="#999"/><rect x="7.8" y="6" width="2" height="1.3" fill="#fff"/><rect x="7.8" y="8.4" width="1.8" height=".9" fill="#888"/></svg>
<svg style="left:247px;top:34.6px" width="11.2" height="9.6" viewBox="0 0 11.2 9.6"><g stroke-width="1.1"><path d="M0.4 1h2.8M0.8 8.8h2.2" stroke="#00f"/><path d="M3.4 3.7h2.6M3.6 6.3h1.6" stroke="#00f" stroke-width="1.3"/><path d="M6.2 0.9h2.6M6.8 6.2h3.8" stroke="#f0f" stroke-width="1.3"/><path d="M7 3.6h3.6" stroke="#000" stroke-width="1.2"/><path d="M4.6 1h.8M10 1h.8" stroke="#333"/></g></svg>
<svg style="left:263.2px;top:34.4px" width="9.8" height="9.4" viewBox="0 0 9.8 9.4"><rect x="0.6" y="0.6" width="8.6" height="8.4" fill="#fff" stroke="#000" stroke-width="1.1"/><rect x="1.2" y="2.2" width="7.4" height="2" fill="#9a9a9a"/><rect x="1.2" y="6.2" width="7.4" height="1" fill="#00008b"/></svg>
<svg style="left:281px;top:34px" width="11.4" height="10.2" viewBox="0 0 11.4 10.2"><g transform="scale(1.0)"><path d="M6.2 9L11 5.1v1.5L6.7 10.1 5.2 9z" fill="#fff" stroke="#000" stroke-width=".7"/><path d="M0.3 3.7L5.3 0.3 11 5.1 6.2 9z" fill="#0808f0" stroke="#00006a" stroke-width=".5"/><path d="M0.3 3.7l.5 1.3 5.9 5.1-.5-1.1z" fill="#000070"/><circle cx="1" cy="3" r=".7" fill="#f0e800"/><circle cx="5.2" cy=".5" r=".7" fill="#f0e800"/></g></svg>
<svg style="left:297px;top:34.2px" width="11" height="10" viewBox="0 0 11 10"><g transform="scale(1.0)" stroke="#000" stroke-width=".85" fill="#e6e63a"><rect x="4.5" y="0.45" width="6.1" height="5.5"/><rect x="2.4" y="2.3" width="6.1" height="5.5"/><rect x="0.45" y="4.2" width="6.2" height="5.5"/><rect x="1.9" y="5.5" width="3.3" height="2.9" fill="#f4f4a0" stroke="none" opacity=".75"/></g></svg>
<svg style="left:312px;top:34.2px" width="11" height="10" viewBox="0 0 11 10"><g transform="scale(1.0)" stroke="#000" stroke-width=".85" fill="#28e028"><rect x="4.5" y="0.45" width="6.1" height="5.5"/><rect x="2.4" y="2.3" width="6.1" height="5.5"/><rect x="0.45" y="4.2" width="6.2" height="5.5"/><rect x="1.9" y="5.5" width="3.3" height="2.9" fill="#90f090" stroke="none" opacity=".75"/></g></svg>
<svg style="left:327.2px;top:34.2px" width="11" height="10" viewBox="0 0 11 10"><g transform="scale(1.0)" stroke="#4a4a4a" stroke-width=".85" fill="#e4e4e4"><rect x="4.5" y="0.45" width="6.1" height="5.5"/><rect x="2.4" y="2.3" width="6.1" height="5.5"/><rect x="0.45" y="4.2" width="6.2" height="5.5"/><rect x="1.9" y="5.5" width="3.3" height="2.9" fill="#fff" stroke="none" opacity=".75"/><path d="M2 6.2v2.4M3.6 6.2v2.4M2 7.4h1.6M5 4.4h2M7 2.6h2" stroke="#222" stroke-width=".7"/></g></svg>
<span class="t" style="left:349.00px;top:33px;line-height:12px;font-size:11.5px;color:#e0d800;font-weight:bold;transform:scaleX(0.9395);text-shadow:-.6px 0 0 #000,.6px 0 0 #000,0 -.6px 0 #000,0 .6px 0 #000,.5px .5px 0 #000;">?</span>
<div class="a" style="left:3px;top:17.8px;width:11px;height:12px;background:#f6f5ec"></div>
<svg style="left:3.2px;top:18.6px" width="11" height="10" viewBox="0 0 11 10"><g transform="scale(1.0)" stroke="#000" stroke-width=".85" fill="#e0e038"><rect x="4.5" y="0.45" width="6.1" height="5.5"/><rect x="2.4" y="2.3" width="6.1" height="5.5"/><rect x="0.45" y="4.2" width="6.2" height="5.5"/><rect x="1.9" y="5.5" width="3.3" height="2.9" fill="#f4f4a0" stroke="none" opacity=".75"/></g></svg>
<div class="a" style="left:0px;top:46px;width:180px;height:1px;background:#f4f3ea"></div>
<div class="a" style="left:0px;top:47px;width:180px;height:1px;background:#dad7c8"></div>
<svg style="left:0px;top:0px" width="180" height="140" viewBox="0 0 180 140"><g stroke="#b9b6a8" stroke-width="1" stroke-dasharray="1.35 1.3" fill="none"><path d="M17.5 73.5h4"/><path d="M27.5 78.5v3M27.5 87.5v39.5"/><path d="M29.5 84.5h4.5"/><path d="M39.5 90v5M39.5 95.5h7"/><path d="M27.5 105.5h6M27.5 116.5h6M27.5 127h6"/></g></svg>
<div class="a" style="left:11.2px;top:70.6px;width:6.2px;height:6px;border:1px solid #c2bfb2;background:#fff"></div>
<div class="a" style="left:12.799999999999999px;top:73.1px;width:3px;height:1px;background:#444"></div>
<div class="a" style="left:24px;top:81.6px;width:6.2px;height:6px;border:1px solid #c2bfb2;background:#fff"></div>
<div class="a" style="left:25.6px;top:84.1px;width:3px;height:1px;background:#444"></div>
<svg style="left:21.2px;top:68.2px" width="11.4" height="10.4" viewBox="0 0 11.4 10.4"><rect x="1.2" y="0.7" width="8.8" height="6.6" fill="#2ed6e8" stroke="#2a2a2a" stroke-width="1.3"/><path d="M3.6 2.4l4 3M7.6 2.4l-4 3" stroke="#a8ffff" stroke-width=".7"/><rect x="0.8" y="8" width="9.8" height="1.1" fill="#b0b0b0"/><rect x="0.2" y="9.1" width="11" height="1.2" fill="#111"/></svg>
<svg style="left:34px;top:79.2px" width="11" height="10" viewBox="0 0 11 10"><g transform="scale(.98 1.08)" stroke="#000" stroke-width=".85" fill="#e0e038"><rect x="4.5" y="0.45" width="6.1" height="5.5"/><rect x="2.4" y="2.3" width="6.1" height="5.5"/><rect x="0.45" y="4.2" width="6.2" height="5.5"/><rect x="1.9" y="5.5" width="3.3" height="2.9" fill="#f4f4a0" stroke="none" opacity=".75"/></g></svg>
<svg style="left:46.6px;top:90.2px" width="11.172" height="9.995999999999999" viewBox="0 0 11.172 9.995999999999999"><g transform="scale(0.98)"><path d="M6.2 9L11 5.1v1.5L6.7 10.1 5.2 9z" fill="#fff" stroke="#000" stroke-width=".7"/><path d="M0.3 3.7L5.3 0.3 11 5.1 6.2 9z" fill="#0808f0" stroke="#00006a" stroke-width=".5"/><path d="M0.3 3.7l.5 1.3 5.9 5.1-.5-1.1z" fill="#000070"/><circle cx="1" cy="3" r=".7" fill="#f0e800"/><circle cx="5.2" cy=".5" r=".7" fill="#f0e800"/></g></svg>
<svg style="left:34px;top:101.1px" width="11" height="9" viewBox="0 0 11 9"><rect x="0.5" y="0.5" width="10" height="8" fill="#fff" stroke="#000" stroke-width="1"/><path d="M2.3 1.4v1.6M2.3 3.8v1.8" stroke="#22f" stroke-width="1.2"/><path d="M3.6 4.6h4.6" stroke="#f3f" stroke-width="1.4"/><path d="M4.4 2.4h1M6.8 2.4h1.4" stroke="#aab" stroke-width=".9"/><rect x="1" y="7.2" width="9" height="1" fill="#aaa"/></svg>
<svg style="left:34px;top:111.7px" width="11" height="9" viewBox="0 0 11 9"><rect x="0.5" y="0.5" width="10" height="8" fill="#fff" stroke="#000" stroke-width="1"/><rect x="1" y="0.9" width="9" height="1" fill="#aaa"/><path d="M2.2 2.8h6.6M2.2 4.8h6.6M2.2 6.8h6.6" stroke="#000" stroke-width="1"/></svg>
<svg style="left:34px;top:122.2px" width="11" height="9.2" viewBox="0 0 11 9.2"><rect x="0.5" y="0.5" width="10" height="8.2" fill="#fff" stroke="#000" stroke-width="1"/><path d="M3.6 2.2h5" stroke="#888" stroke-width=".9"/><path d="M2.2 3.8h6.6" stroke="#111" stroke-width="1.3"/><path d="M2.6 5.6h4" stroke="#555" stroke-width=".9"/></svg>
<svg style="left:12.2px;top:454px" width="8.1" height="9.9" viewBox="0 0 8.1 9.9"><g transform="scale(0.9)" fill="none" stroke-width="1.1"><path d="M5.2 1.6q-1.4-1.4-3 -.2q-1.8 1.8-.2 4q1.2 1.2 2.6 .2" stroke="#2020e0"/><path d="M7.4 3.4q-1.6-1.4-3 0q-.8 1.6 1.2 2.4q2.2 .8 1.6 2.6q-1.2 1.8-3.6 .4" stroke="#a0108c"/></g></svg>
<svg style="left:47px;top:453.2px" width="10.716" height="9.588" viewBox="0 0 10.716 9.588"><g transform="scale(0.94)"><path d="M6.2 9L11 5.1v1.5L6.7 10.1 5.2 9z" fill="#fff" stroke="#000" stroke-width=".7"/><path d="M0.3 3.7L5.3 0.3 11 5.1 6.2 9z" fill="#0808f0" stroke="#00006a" stroke-width=".5"/><path d="M0.3 3.7l.5 1.3 5.9 5.1-.5-1.1z" fill="#000070"/><circle cx="1" cy="3" r=".7" fill="#f0e800"/><circle cx="5.2" cy=".5" r=".7" fill="#f0e800"/></g></svg>
<svg style="left:86.2px;top:453.2px" width="11" height="10" viewBox="0 0 11 10"><g transform="scale(0.98)" stroke="#000" stroke-width=".85" fill="#e6e63a"><rect x="4.5" y="0.45" width="6.1" height="5.5"/><rect x="2.4" y="2.3" width="6.1" height="5.5"/><rect x="0.45" y="4.2" width="6.2" height="5.5"/><rect x="1.9" y="5.5" width="3.3" height="2.9" fill="#f4f4a0" stroke="none" opacity=".75"/></g></svg>
<svg style="left:2.8px;top:2.6px" width="9.450000000000001" height="11.55" viewBox="0 0 9.450000000000001 11.55"><g transform="scale(1.05)" fill="none" stroke-width="1.1"><path d="M5.2 1.6q-1.4-1.4-3 -.2q-1.8 1.8-.2 4q1.2 1.2 2.6 .2" stroke="#2020e0"/><path d="M7.4 3.4q-1.6-1.4-3 0q-.8 1.6 1.2 2.4q2.2 .8 1.6 2.6q-1.2 1.8-3.6 .4" stroke="#d01878"/></g></svg>
<svg style="left:473px;top:497.4px" width="8.280000000000001" height="10.120000000000001" viewBox="0 0 8.280000000000001 10.120000000000001"><g transform="scale(0.92)" fill="none" stroke-width="1.1"><path d="M5.2 1.6q-1.4-1.4-3 -.2q-1.8 1.8-.2 4q1.2 1.2 2.6 .2" stroke="#3838f0"/><path d="M7.4 3.4q-1.6-1.4-3 0q-.8 1.6 1.2 2.4q2.2 .8 1.6 2.6q-1.2 1.8-3.6 .4" stroke="#e01880"/></g></svg>
<svg style="left:673px;top:480.5px" width="9" height="9" viewBox="0 0 9 9"><g stroke="#b0ac9a" stroke-width=".9"><path d="M9 1.4l-7.6 7.6M9 4.4l-4.6 4.6M9 7.4l-1.6 1.6"/></g><g stroke="#fff" stroke-width=".8"><path d="M9 0.5l-8.5 8.5M9 3.5l-5.5 5.5M9 6.5l-2.5 2.5"/></g></svg>
</div></body></html>
